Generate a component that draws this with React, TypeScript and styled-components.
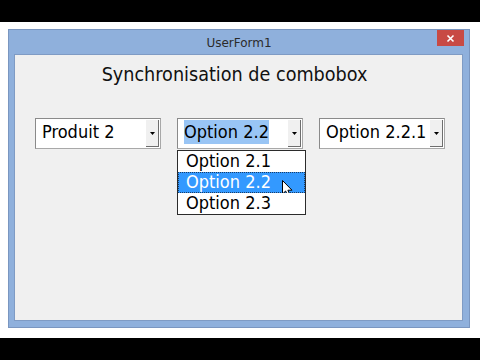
import React from "react";
import styled, { createGlobalStyle } from "styled-components";

const GlobalStyle = createGlobalStyle`
  html, body {
    margin: 0;
    padding: 0;
    background: #000;
  }
  body {
    width: 480px;
    height: 360px;
    overflow: hidden;
    font-family: "DejaVu Sans", Tahoma, sans-serif;
  }
`;

const combos = [
  { value: "Produit 2", selected: false },
  { value: "Option 2.2", selected: true },
  { value: "Option 2.2.1", selected: false },
];

const options = ["Option 2.1", "Option 2.2", "Option 2.3"];

export default function App() {
  return (
    <>
      <GlobalStyle />
      <Screen>
        <Stage>
          <Window>
            <TitleBar>
              <Title>UserForm1</Title>
              <CloseButton>
                <svg width="9" height="9" viewBox="0 0 9 9">
                  <path d="M1.5 1.5 L7.5 7.5 M7.5 1.5 L1.5 7.5" stroke="#fff" strokeWidth="1.6" />
                </svg>
              </CloseButton>
            </TitleBar>
            <Client>
              <Heading>Synchronisation de combobox</Heading>
              <ComboRow>
                {combos.map((c, i) => (
                  <Combo key={c.value}>
                    <ComboText>
                      <Value selected={c.selected}>{c.value}</Value>
                    </ComboText>
                    <DropButton>
                      <svg width="5" height="3" viewBox="0 0 5 3">
                        <path d="M0 0 H5 L2.5 3 Z" fill="#000" />
                      </svg>
                    </DropButton>
                    {i === 1 && (
                      <DropList>
                        {options.map((o) => (
                          <Item key={o} active={o === "Option 2.2"}>
                            {o}
                            {o === "Option 2.2" && (
                              <Cursor width="12" height="18" viewBox="0 0 12 18">
                                <path
                                  d="M0.5 0.5 L0.5 14 L3.6 11 L6 16.5 L8.2 15.5 L5.9 10.2 L10 10.2 Z"
                                  fill="#fff"
                                  stroke="#000"
                                  strokeWidth="1"
                                />
                              </Cursor>
                            )}
                          </Item>
                        ))}
                      </DropList>
                    )}
                  </Combo>
                ))}
              </ComboRow>
            </Client>
          </Window>
        </Stage>
      </Screen>
    </>
  );
}

const Screen = styled.div`
  width: 480px;
  height: 360px;
  padding-top: 22px;
  box-sizing: border-box;
`;

const Stage = styled.div`
  height: 316px;
  background: #fff;
  padding: 7px 0 0 8px;
  box-sizing: border-box;
`;

const Window = styled.div`
  width: 462px;
  height: 299px;
  box-sizing: border-box;
  background: #8fb0dc;
  border: 1px solid #7a96c0;
  display: flex;
  flex-direction: column;
`;

const TitleBar = styled.div`
  position: relative;
  height: 24px;
  display: flex;
  align-items: center;
  justify-content: center;
`;

const Title = styled.span`
  font-size: 12px;
  color: #2b2b2b;
  margin-top: 1px;
`;

const CloseButton = styled.div`
  position: absolute;
  top: 0;
  right: 5px;
  width: 27px;
  height: 16px;
  background: #c84a44;
  display: flex;
  align-items: center;
  justify-content: center;
`;

const Client = styled.div`
  flex: 1;
  margin: 0 6px 6px 5px;
  background: #f0f0f0;
  border: 1px solid #7f9bc4;
  display: flex;
  flex-direction: column;
`;

const Heading = styled.div`
  margin-top: 7px;
  padding-right: 8px;
  text-align: center;
  font-family: "DejaVu Sans Condensed", "DejaVu Sans", sans-serif;
  font-size: 19.6px;
  color: #111;
  line-height: 26px;
`;

const ComboRow = styled.div`
  display: flex;
  gap: 16px;
  padding: 30px 0 0 20px;
`;

const Combo = styled.div`
  position: relative;
  width: 126px;
  height: 31px;
  box-sizing: border-box;
  border: 1px solid #8a8a8a;
  border-right-color: #a8a8a8;
  border-bottom-color: #a8a8a8;
  background: #fff;
  display: flex;
`;

const ComboText = styled.div`
  flex: 1;
  display: flex;
  align-items: center;
  padding: 0 0 3px 6px;
  font-family: "DejaVu Sans Condensed", "DejaVu Sans", sans-serif;
  font-size: 18px;
  color: #000;
  white-space: nowrap;
  overflow: hidden;
`;

const Value = styled.span<{ selected: boolean }>`
  background: ${(p) => (p.selected ? "#99c5f5" : "transparent")};
  padding: 1px 0 2px;
`;

const DropButton = styled.div`
  width: 13px;
  margin: 1px 1px 1px 0;
  background: #f0f0f0;
  border-right: 1px solid #6e6e6e;
  border-bottom: 1px solid #6e6e6e;
  box-sizing: border-box;
  display: flex;
  align-items: center;
  justify-content: center;
`;

const DropList = styled.div`
  position: absolute;
  top: 31px;
  left: -1px;
  width: 129px;
  box-sizing: border-box;
  border: 1px solid #2b2b2b;
  background: #fff;
  z-index: 2;
`;

const Item = styled.div<{ active: boolean }>`
  position: relative;
  height: 21px;
  line-height: 20px;
  padding-left: 8px;
  font-family: "DejaVu Sans Condensed", "DejaVu Sans", sans-serif;
  font-size: 18px;
  color: ${(p) => (p.active ? "#fff" : "#000")};
  background: ${(p) => (p.active ? "#3399ff" : "#fff")};
  outline: ${(p) => (p.active ? "1px dotted #1a3d66" : "none")};
  outline-offset: -1px;
`;

const Cursor = styled.svg`
  position: absolute;
  left: 104px;
  top: 8px;
`;
